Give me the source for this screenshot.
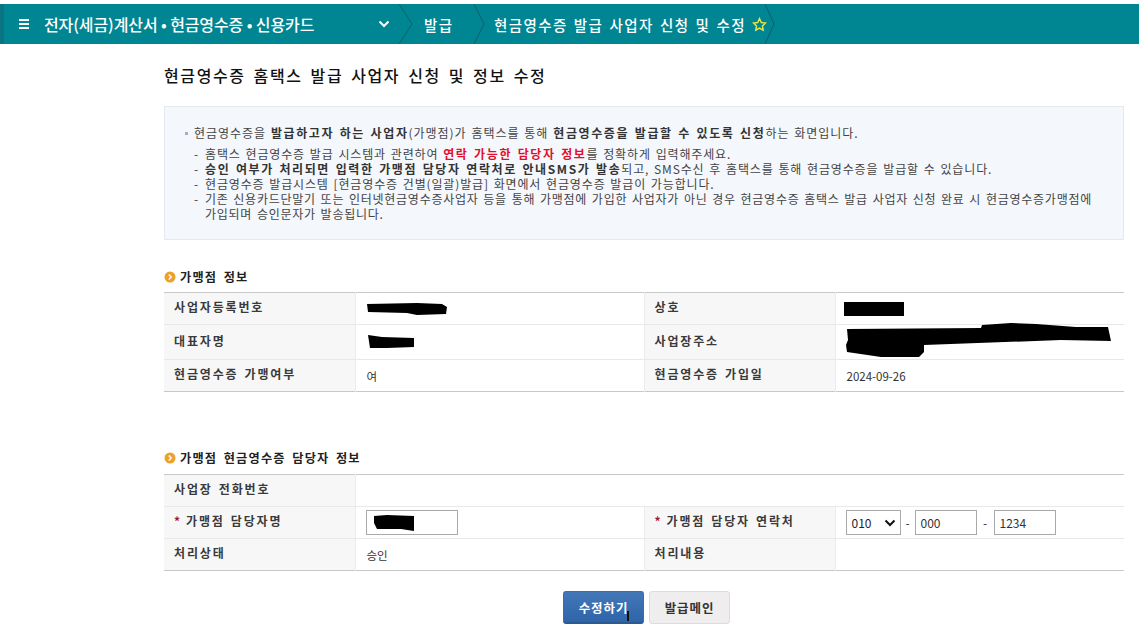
<div class="page">
  <header class="bar">
    <div class="seg first">
      <svg class="burger" width="10" height="12" viewBox="0 0 10 12"><path d="M0 2h10M0 6h10M0 10h10" stroke="#fff" stroke-width="2"/></svg>
      <span class="menu-title">전자(세금)계산서 • 현금영수증 • 신용카드</span>
      <svg class="down" width="12" height="8" viewBox="0 0 12 8"><path d="M1.500 1.500 6 6l4.500-4.500" fill="none" stroke="#fff" stroke-width="2"/></svg>
    </div>
    <svg class="chev" width="14" height="40" viewBox="0 0 14 40"><path d="M0 0 13 20 0 40" fill="none" stroke="#0d5f68" stroke-width="1"/></svg>
    <span class="crumb c1">발급</span>
    <svg class="chev" width="14" height="40" viewBox="0 0 14 40"><path d="M0 0 10 20 0 40" fill="none" stroke="#0d5f68" stroke-width="1"/></svg>
    <span class="crumb c2">현금영수증 발급 사업자 신청 및 수정</span>
    <svg class="star" width="15" height="15" viewBox="0 0 24 24"><path d="M12 2.500l2.900 6.300 6.800.8-5 4.700 1.300 6.800-6-3.400-6 3.400 1.300-6.800-5-4.700 6.800-.8z" fill="none" stroke="#e8e84a" stroke-width="2.200"/></svg>
    <svg class="chev last" width="10" height="40" viewBox="0 0 10 40"><path d="M0 0 9 20 0 40" fill="none" stroke="#0d5f68" stroke-width="1"/></svg>
  </header>

  <main class="content">
    <h1>현금영수증 홈택스 발급 사업자 신청 및 정보 수정</h1>

    <section class="notice">
      <p class="lead"><i class="sq"></i>현금영수증을 <b>발급하고자 하는 사업자</b>(가맹점)가 홈택스를 통해 <b>현금영수증을 발급할 수 있도록 신청</b>하는 화면입니다.</p>
      <ul>
        <li>홈택스 현금영수증 발급 시스템과 관련하여 <b class="red">연락 가능한 담당자 정보</b>를 정확하게 입력해주세요.</li>
        <li><b>승인 여부가 처리되면 입력한 가맹점 담당자 연락처로 안내SMS가 발송</b>되고, SMS수신 후 홈택스를 통해 현금영수증을 발급할 수 있습니다.</li>
        <li>현금영수증 발급시스템 [현금영수증 건별(일괄)발급] 화면에서 현금영수증 발급이 가능합니다.</li>
        <li class="long">기존 신용카드단말기 또는 인터넷현금영수증사업자 등을 통해 가맹점에 가입한 사업자가 아닌 경우 현금영수증 홈택스 발급 사업자 신청 완료 시 현금영수증가맹점에 가입되며 승인문자가 발송됩니다.</li>
      </ul>
    </section>

    <h2 class="sec one"><svg width="12" height="12" viewBox="0 0 12 12"><circle cx="6" cy="6" r="5.500" fill="#eea02c"/><path d="M4.800 3.500 7.200 6 4.800 8.500" fill="none" stroke="#fff" stroke-width="1.500"/></svg>가맹점 정보</h2>
    <table>
      <colgroup><col class="a"/><col class="b"/><col class="c"/><col/></colgroup>
      <tbody>
        <tr class="r32">
          <th>사업자등록번호</th>
          <td><svg class="ink" width="80" height="14" viewBox="0 0 80 14"><path d="M0 2 50 1 75 2 80 5 79 12 50 13 40 11 1 10z"/></svg></td>
          <th>상호</th>
          <td><svg class="ink shop" width="60" height="16" viewBox="0 0 60 16"><path d="M0 1h60v14H0z"/></svg></td>
        </tr>
        <tr class="r35">
          <th>대표자명</th>
          <td><svg class="ink" width="48" height="14" viewBox="0 0 48 14"><path d="M1 0 15 2 47 3 47 12 20 13 3 13z"/></svg></td>
          <th>사업장주소</th>
          <td><svg class="ink addr" width="266" height="34" viewBox="0 0 266 34"><path d="M0 4 134 3 135 0 164-2 189-1 229 2 261 2 264 16 214 15 77 20 77 27 72 32 34 32 0 27-1 20 1 15z"/></svg></td>
        </tr>
        <tr class="r32">
          <th>현금영수증 가맹여부</th>
          <td>여</td>
          <th>현금영수증 가입일</th>
          <td>2024-09-26</td>
        </tr>
      </tbody>
    </table>

    <h2 class="sec two"><svg width="12" height="12" viewBox="0 0 12 12"><circle cx="6" cy="6" r="5.500" fill="#eea02c"/><path d="M4.800 3.500 7.200 6 4.800 8.500" fill="none" stroke="#fff" stroke-width="1.500"/></svg>가맹점 현금영수증 담당자 정보</h2>
    <table>
      <colgroup><col class="a"/><col class="b"/><col class="c"/><col/></colgroup>
      <tbody>
        <tr class="r32">
          <th>사업장 전화번호</th>
          <td colspan="3"></td>
        </tr>
        <tr class="r32">
          <th><em>*</em>가맹점 담당자명</th>
          <td class="field"><span class="input name"><svg class="ink" width="42" height="16" viewBox="0 0 42 16"><path d="M1 1 14 0 41 1 41 16 28 14 4 14 1 8z"/></svg></span></td>
          <th><em>*</em>가맹점 담당자 연락처</th>
          <td class="field phone">
            <span class="select">010<svg width="12" height="8" viewBox="0 0 12 8"><path d="M1.500 1.500 6 6l4.500-4.500" fill="none" stroke="#111" stroke-width="2"/></svg></span>
            <span class="dash">-</span>
            <span class="input num">000</span>
            <span class="dash wide">-</span>
            <span class="input num">1234</span>
          </td>
        </tr>
        <tr class="r32">
          <th>처리상태</th>
          <td>승인</td>
          <th>처리내용</th>
          <td></td>
        </tr>
      </tbody>
    </table>

    <div class="actions">
      <button class="primary">수정하기<i class="caret"></i></button>
      <button class="ghost">발급메인</button>
    </div>
  </main>
</div>

<style>
  :global(body) { margin: 0; background: #fff; }
  .page { width: 1139px; height: 638px; overflow: hidden; padding-top: 4px; box-sizing: border-box;
    font-family: "Noto Sans CJK KR", "Noto Sans", sans-serif; color: #333; }

  .bar { height: 40px; background: #008592; border-left: 4px solid #0b7482; display: flex; align-items: center; color: #fff; box-sizing: border-box; }
  .seg.first { width: 395px; display: flex; align-items: center; }
  .burger { margin-left: 15px; }
  .menu-title { margin-left: 15px; font-size: 16px; font-weight: 500; letter-spacing: -.1px; white-space: nowrap; }
  .down { margin-left: auto; margin-right: 9px; }
  .chev { flex: none; display: block; }
  .crumb { font-size: 14.500px; font-weight: 500; white-space: nowrap; }
  .c1 { margin-left: 11px; width: 50px; letter-spacing: 1.300px; }
  .c2 { margin-left: 6px; letter-spacing: 1.400px; word-spacing: 1.500px; }
  .star { margin-left: 6px; flex: none; }
  .last { margin-left: -2px; }

  .content { margin-left: 164px; width: 960px; }
  h1 { margin: 0; padding-top: 19px; height: 43px; box-sizing: border-box; font-size: 16px; line-height: 24px; font-weight: 500; color: #111; letter-spacing: 1.600px; word-spacing: 2.800px; white-space: nowrap; }

  .notice { margin-top: 19px; height: 134px; box-sizing: border-box; background: #f4f7fc; border: 1px solid #e6e8ee; padding: 18px 20px 0; font-size: 12px; line-height: 15px; color: #444; letter-spacing: .95px; word-spacing: 1.300px; word-break: keep-all; }
  .notice b { font-weight: 700; color: #333; letter-spacing: 1.600px; }
  .notice b.red { color: #e0102c; }
  .lead { margin: 0 0 6px; white-space: pre-wrap; }
  .sq { display: inline-block; width: 3px; height: 3px; background: #aab; margin: 0 6px 3px 0; vertical-align: middle; }
  ul { margin: 0; padding: 0 10px 0 20px; list-style: none; letter-spacing: .85px; }
  li { position: relative; }
  li.long { letter-spacing: .75px; }
  li::before { content: "-"; position: absolute; left: -11px; }

  .sec { margin: 0; display: flex; align-items: center; gap: 4px; font-size: 12.200px; line-height: 16px; font-weight: 700; color: #222; letter-spacing: 1.200px; word-spacing: 2.500px; box-sizing: border-box; }
  .sec.one { margin-top: 25px; height: 27px; padding-bottom: 3px; }
  .sec.two { margin-top: 54px; height: 28px; padding-bottom: 4px; }

  table { width: 960px; border-collapse: collapse; table-layout: fixed; border-top: 1px solid #c8c8c8; border-bottom: 1px solid #c8c8c8; font-size: 11.500px; }
  col.a { width: 191px; }
  col.b { width: 289px; }
  col.c { width: 191px; }
  tr + tr th, tr + tr td { border-top: 1px solid #e8e8e8; }
  tr.r32 { height: 32px; }
  tr.r35 { height: 35px; }
  th { background: #f7f7f7; border-right: 1px solid #ececec; text-align: left; padding: 0 0 4px 10px; font-weight: 700; font-size: 12px; color: #3a3a3a; letter-spacing: 1.850px; word-spacing: 1.500px; white-space: nowrap; }
  td { padding: 0 0 0 11px; color: #333; }
  td.field { padding-left: 10px; }
  td:nth-child(2) { border-right: 1px solid #ececec; }
  td[colspan] { border-right: 0; }
  em { color: #a8182c; font-style: normal; font-weight: 700; margin-right: 6px; letter-spacing: 0; }
  .ink { display: block; fill: #000; overflow: visible; }
  .ink.shop { margin-left: -3px; }

  .input { display: inline-flex; align-items: center; box-sizing: border-box; height: 25px; border: 1px solid #a9a9a9; background: #fff; vertical-align: middle; color: #333; font-size: 12px; }
  .input.name { width: 92px; padding-left: 6px; }
  .input.num { width: 62px; padding-left: 5px; }
  .select { display: inline-flex; align-items: center; justify-content: space-between; box-sizing: border-box; width: 55px; height: 25px; border: 1px solid #a9a9a9; padding: 0 4px 0 5px; vertical-align: middle; font-size: 12px; color: #222; }
  .phone { white-space: nowrap; font-size: 0; }
  .dash { display: inline-block; width: 14px; text-align: center; font-size: 12px; vertical-align: middle; }
  .dash.wide { width: 17px; }

  .actions { margin-top: 20px; display: flex; justify-content: center; gap: 5px; padding-left: 5px; }
  button { height: 33px; box-sizing: border-box; font: inherit; font-size: 12.500px; font-weight: 700; border-radius: 3px; letter-spacing: .9px; padding: 0; position: relative; }
  .primary { width: 81px; background: linear-gradient(#4277b8, #2f64a8); border: 1px solid #3a6ca8; border-bottom: 2px solid #2c5a92; color: #fff; }
  .ghost { width: 81px; background: #efedee; border: 1px solid #dcdcdc; color: #333; }
  .caret { position: absolute; right: 14px; top: 19px; width: 2px; height: 10px; background: #111; }
</style>
